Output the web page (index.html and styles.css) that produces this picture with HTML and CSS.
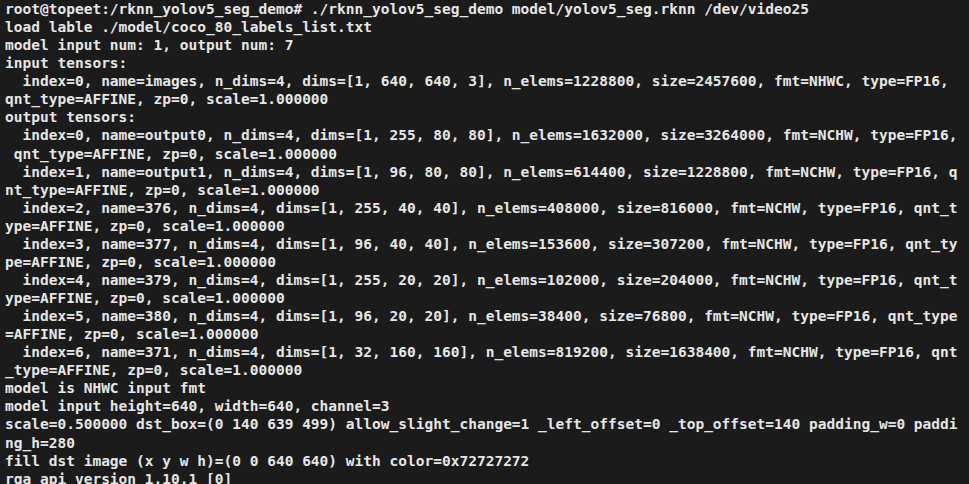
FILE: index.html
```html
<!DOCTYPE html>
<html>
<head>
<meta charset="utf-8">
<link rel="stylesheet" href="styles.css">
</head>
<body>
<pre class="term">root@topeet:/rknn_yolov5_seg_demo# ./rknn_yolov5_seg_demo model/yolov5_seg.rknn /dev/video25
load lable ./model/coco_80_labels_list.txt
model input num: 1, output num: 7
input tensors:
  index=0, name=images, n_dims=4, dims=[1, 640, 640, 3], n_elems=1228800, size=2457600, fmt=NHWC, type=FP16,
qnt_type=AFFINE, zp=0, scale=1.000000
output tensors:
  index=0, name=output0, n_dims=4, dims=[1, 255, 80, 80], n_elems=1632000, size=3264000, fmt=NCHW, type=FP16,
 qnt_type=AFFINE, zp=0, scale=1.000000
  index=1, name=output1, n_dims=4, dims=[1, 96, 80, 80], n_elems=614400, size=1228800, fmt=NCHW, type=FP16, q
nt_type=AFFINE, zp=0, scale=1.000000
  index=2, name=376, n_dims=4, dims=[1, 255, 40, 40], n_elems=408000, size=816000, fmt=NCHW, type=FP16, qnt_t
ype=AFFINE, zp=0, scale=1.000000
  index=3, name=377, n_dims=4, dims=[1, 96, 40, 40], n_elems=153600, size=307200, fmt=NCHW, type=FP16, qnt_ty
pe=AFFINE, zp=0, scale=1.000000
  index=4, name=379, n_dims=4, dims=[1, 255, 20, 20], n_elems=102000, size=204000, fmt=NCHW, type=FP16, qnt_t
ype=AFFINE, zp=0, scale=1.000000
  index=5, name=380, n_dims=4, dims=[1, 96, 20, 20], n_elems=38400, size=76800, fmt=NCHW, type=FP16, qnt_type
=AFFINE, zp=0, scale=1.000000
  index=6, name=371, n_dims=4, dims=[1, 32, 160, 160], n_elems=819200, size=1638400, fmt=NCHW, type=FP16, qnt
_type=AFFINE, zp=0, scale=1.000000
model is NHWC input fmt
model input height=640, width=640, channel=3
scale=0.500000 dst_box=(0 140 639 499) allow_slight_change=1 _left_offset=0 _top_offset=140 padding_w=0 paddi
ng_h=280
fill dst image (x y w h)=(0 0 640 640) with color=0x72727272
rga_api version 1.10.1_[0]</pre>
</body>
</html>
```
FILE: styles.css
```css
html, body {
  margin: 0;
  padding: 0;
  background: #1b1b1b;
  overflow: hidden;
}
.term {
  margin: 0;
  padding: 0 0 0 5px;
  font-family: "DejaVu Sans Mono", monospace;
  font-weight: 700;
  font-size: 14.53px;
  line-height: 18.07px;
  color: #e6e6e6;
  white-space: pre;
}
```
